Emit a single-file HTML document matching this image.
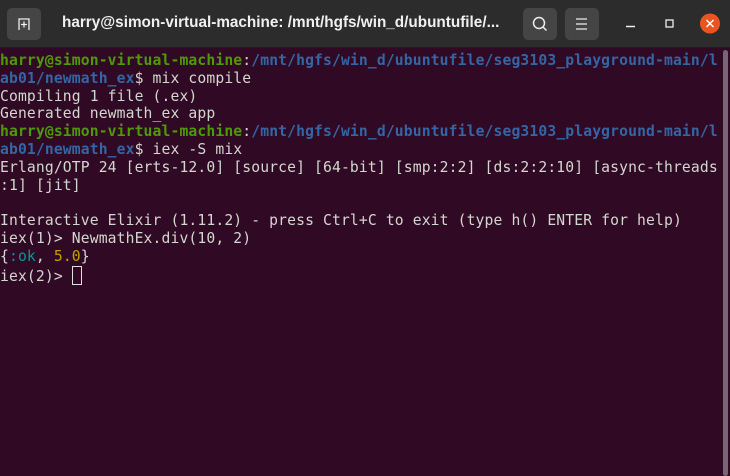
<!DOCTYPE html>
<html><head><style>
html,body{margin:0;padding:0;width:730px;height:476px;overflow:hidden;background:#300a24}
.tb{position:absolute;left:0;top:0;width:730px;height:47px;background:#2c2c2c;border-bottom:1px solid #1e1e1e}
.btn{position:absolute;top:8px;width:34px;height:32px;background:#454545;border-radius:5px}
.title{position:absolute;left:62px;top:14px;color:#f0f0f0;font:bold 15.3px "Liberation Sans","DejaVu Sans",sans-serif}
pre{position:absolute;left:0;top:52px;margin:0;font:14.7px/17.8px "DejaVu Sans Mono","Liberation Mono",monospace;letter-spacing:0.13px;color:#d3d7cf;white-space:pre}
.g{color:#4e9a06;font-weight:bold}.b{color:#3465a4;font-weight:bold}
.c{color:#06989a}.y{color:#c4a000}
.cur{display:inline-block;width:8px;height:17px;border:1px solid #e0e0e0;vertical-align:-4px}
.sb{position:absolute;left:723px;top:50px;width:5px;height:426px;background:#7a6574;border-radius:3px}
</style></head><body>
<div class="tb">
<div class="btn" style="left:7px"><svg width="34" height="32"><path d="M12 22V11h10v11" fill="none" stroke="#eee" stroke-width="1.3"/><path d="M17 13.5v6M14 16.5h6" stroke="#eee" stroke-width="1.3"/></svg></div>
<div class="title">harry@simon-virtual-machine: /mnt/hgfs/win_d/ubuntufile/...</div>
<div class="btn" style="left:523px"><svg width="34" height="32"><circle cx="16" cy="15" r="5.5" fill="none" stroke="#eee" stroke-width="1.5"/><path d="M20 19l3.5 3.5" stroke="#eee" stroke-width="1.5"/></svg></div>
<div class="btn" style="left:565px"><svg width="34" height="32"><path d="M11 11h11M11 16h11M11 21h11" stroke="#eee" stroke-width="1.3"/></svg></div>
<svg style="position:absolute;left:620px;top:8px" width="110" height="32"><path d="M6 18.5h9" stroke="#eee" stroke-width="1.5"/><rect x="46" y="12" width="7" height="7" fill="none" stroke="#eee" stroke-width="1.3"/><circle cx="90" cy="15.5" r="10" fill="#e95420"/><path d="M86.5 12l7 7M93.5 12l-7 7" stroke="#fff" stroke-width="1.5"/></svg>
</div>
<pre><span class="g">harry@simon-virtual-machine</span>:<span class="b">/mnt/hgfs/win_d/ubuntufile/seg3103_playground-main/l
ab01/newmath_ex</span>$ mix compile
Compiling 1 file (.ex)
Generated newmath_ex app
<span class="g">harry@simon-virtual-machine</span>:<span class="b">/mnt/hgfs/win_d/ubuntufile/seg3103_playground-main/l
ab01/newmath_ex</span>$ iex -S mix
Erlang/OTP 24 [erts-12.0] [source] [64-bit] [smp:2:2] [ds:2:2:10] [async-threads
:1] [jit]

Interactive Elixir (1.11.2) - press Ctrl+C to exit (type h() ENTER for help)
iex(1)&gt; NewmathEx.div(10, 2)
{<span class="c">:ok</span>, <span class="y">5.0</span>}
iex(2)&gt; <span class="cur"></span></pre>
<div class="sb"></div>
</body></html>
